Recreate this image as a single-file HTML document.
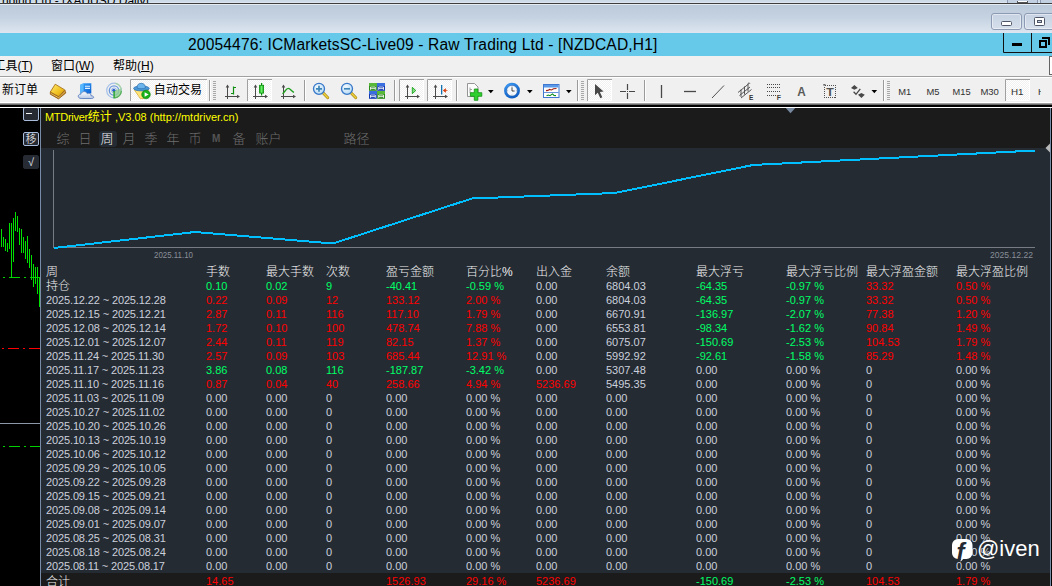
<!DOCTYPE html>
<html lang="zh-CN">
<head>
<meta charset="utf-8">
<title>20054476: ICMarketsSC-Live09 - Raw Trading Ltd - [NZDCAD,H1]</title>
<style>
html,body{margin:0;padding:0;}
body{width:1052px;height:586px;overflow:hidden;position:relative;background:#000;font-family:"Liberation Sans","Noto Sans CJK SC",sans-serif;}
.abs{position:absolute;}
#bgwin{left:0;top:0;width:1052px;height:3px;background:linear-gradient(#cddbe8 0,#cddbe8 2px,#dbe5f0 2px);overflow:hidden;}
#bgwin span{position:absolute;left:2px;top:-6px;font-size:12px;line-height:14px;color:#000;white-space:nowrap;}
#bgline{left:0;top:3px;width:1052px;height:1px;background:#3e3e3e;}
#frame{left:0;top:4px;width:1052px;height:29px;background:linear-gradient(#bbcadb 0%,#c5d2e1 45%,#d2dde9 75%,#dce5f0 100%);border-top:1px solid #e6ecf4;box-sizing:border-box;}
.fb{position:absolute;top:8px;height:17px;border:1px solid #8d9ab4;border-radius:3px;box-sizing:border-box;background:linear-gradient(#c6d2e2,#d6dfeb);box-shadow:inset 0 0 0 1px rgba(255,255,255,.45);}
#title{left:0;top:33px;width:1052px;height:23px;background:#66c9ea;}
#title .t{position:absolute;left:188px;top:1px;font-size:15.6px;line-height:21px;color:#000;white-space:nowrap;letter-spacing:0.14px;}
#menu{left:0;top:56px;width:1052px;height:20px;background:#f0f0f0;}
#menu span{position:absolute;top:2px;font-size:12px;line-height:16px;color:#000;white-space:nowrap;}
#tbline2{left:0;top:104px;width:1052px;height:3px;background:#000;border-top:1px solid #696969;box-sizing:border-box;}
#tbline3{left:0;top:107px;width:1052px;height:1px;background:#fff;}
#left{left:0;top:108px;width:40px;height:478px;background:#000;}
#panel{left:40px;top:108px;width:1010px;height:478px;background:#242b33;border-left:1px solid #788ca8;box-sizing:border-box;}
#phead{left:41px;top:108px;width:1009px;height:40px;background:#1b1b1b;}
#rline{left:1050px;top:108px;width:1px;height:478px;background:#788ca8;}
#redge{left:1051px;top:108px;width:1px;height:478px;background:#000;}
#total{left:41px;top:573px;width:1009px;height:13px;background:#1b1b1b;}
.c{position:absolute;font-size:11px;line-height:14px;white-space:nowrap;}
.c.h{color:#f0f0f0;font-size:12px;font-weight:300;}
.c.w{color:#ccd0dc;}
.c.d{letter-spacing:-0.13px;}
.c.r{color:#ff0000;}
.c.g{color:#00ff66;}

#ptitle{left:45px;top:110px;font-size:11px;line-height:14px;color:#ffff00;white-space:nowrap;}
#tabs{left:0;top:130px;width:1052px;height:18px;}
#tabs span{position:absolute;top:0;font-weight:300;font-size:13px;line-height:18px;color:#6e6e6e;white-space:nowrap;}
#tabs span.on{color:#f0f0f0;background:#242b33;border-radius:3px;padding:0 3.500px 0 1.500px;margin-left:-1.500px;height:16px;top:1px;line-height:16px;}
#tabs span.m{font-size:10px;font-weight:bold;color:#545454;}
.lb{left:23px;width:16px;height:14px;box-sizing:border-box;border:1px solid #a9bcdc;border-radius:2px;background:#252a33;color:#fff;font-weight:300;font-size:11px;line-height:12px;text-align:center;overflow:hidden;}
.lb.nb{border-color:#252a33;font-size:11px;font-weight:normal;color:#e8e8f0;}
#wm{left:950px;top:537px;width:102px;height:26px;color:#fff;}
#wm span{position:absolute;left:27px;top:-1px;font-size:22px;line-height:26px;}
</style>
</head>
<body>
<div id="bgwin" class="abs"><span>nding Ltd - [XAUUSD,Daily]</span><i style="position:absolute;left:1007px;top:0;width:31px;height:3px;background:#c3d0e2;border-left:1px solid #8d9ab2;border-right:1px solid #8d9ab2;box-sizing:border-box"></i><i style="position:absolute;left:1017px;top:1px;width:11px;height:2px;background:#fff;border:1px solid #555;border-top:0;box-sizing:border-box"></i><i style="position:absolute;left:1040px;top:0;width:12px;height:3px;background:#c3d0e2;border-left:1px solid #8d9ab2;box-sizing:border-box"></i></div>
<div id="bgline" class="abs"></div>
<div id="frame" class="abs"><div class="fb" style="left:991px;width:31px"><i style="position:absolute;left:9px;top:7px;width:11px;height:5px;box-sizing:border-box;background:#fff;border:1px solid #4e5566;border-radius:1.5px"></i></div><div class="fb" style="left:1024px;width:34px"><i style="position:absolute;left:9px;top:3px;width:11px;height:9px;box-sizing:border-box;background:#fff;border:1px solid #4e5566;border-radius:1.5px"></i><i style="position:absolute;left:12px;top:6px;width:5px;height:3px;box-sizing:border-box;background:#c8d2e0;border:1px solid #4e5566"></i></div></div>
<div id="title" class="abs"><span class="t">20054476: ICMarketsSC-Live09 - Raw Trading Ltd - [NZDCAD,H1]</span><svg style="position:absolute;left:1000px;top:0" width="52" height="23" viewBox="1000 33 52 23"><path d="M1003.5 33V52.500H1052M1031.500 33V52.500" stroke="#111" stroke-width="1" fill="none"/><rect x="1012" y="43" width="10" height="3" fill="#000"/><rect x="1040" y="41" width="6" height="6" fill="none" stroke="#000" stroke-width="2"/><path d="M1042 38H1049V45" fill="none" stroke="#000" stroke-width="2"/></svg></div>
<div id="menu" class="abs"><span style="left:-6.500px">工具(<u>T</u>)</span><span style="left:51px">窗口(<u>W</u>)</span><span style="left:113px">帮助(<u>H</u>)</span><i style="position:absolute;left:1049px;top:0;width:6px;height:19px;box-sizing:border-box;background:#fff;border:1px solid #646464"></i></div>
<svg class="abs" style="left:0;top:76px" width="1052" height="28" viewBox="0 76 1052 28" font-family="Liberation Sans, Noto Sans CJK SC, sans-serif">
<defs><linearGradient id="gd" x1="0" y1="0" x2="1" y2="1"><stop offset="0" stop-color="#ffea70"/><stop offset="0.6" stop-color="#f0c020"/><stop offset="1" stop-color="#c88a10"/></linearGradient><linearGradient id="bl" x1="0" y1="0" x2="1" y2="1"><stop offset="0" stop-color="#39a8ff"/><stop offset="1" stop-color="#0a5ed0"/></linearGradient><linearGradient id="cl" x1="0" y1="0" x2="0" y2="1"><stop offset="0" stop-color="#ffffff"/><stop offset="1" stop-color="#b8c8e4"/></linearGradient><linearGradient id="gr" x1="0" y1="0" x2="1" y2="0"><stop offset="0" stop-color="#10b010"/><stop offset="0.5" stop-color="#70f070"/><stop offset="1" stop-color="#10b010"/></linearGradient><radialGradient id="ck" cx="0.4" cy="0.3" r="0.8"><stop offset="0" stop-color="#48a8ff"/><stop offset="1" stop-color="#0450b8"/></radialGradient><radialGradient id="mg" cx="0.4" cy="0.35" r="0.7"><stop offset="0" stop-color="#f4fbff"/><stop offset="1" stop-color="#b4d8f4"/></radialGradient><pattern id="dt" width="2" height="2" patternUnits="userSpaceOnUse"><rect width="2" height="2" fill="#f0f0f0"/><rect width="1" height="1" fill="#fff"/><rect x="1" y="1" width="1" height="1" fill="#fff"/></pattern></defs>
<rect x="0" y="76" width="1052" height="28" fill="#f0f0f0"/>
<rect x="0" y="76" width="1052" height="1" fill="#a0a0a0"/><rect x="0" y="77" width="1052" height="1" fill="#ffffff"/>
<rect x="0" y="102" width="1052" height="1" fill="#ffffff"/><rect x="0" y="103" width="1052" height="1" fill="#a0a0a0"/>
<text x="2" y="94.3" font-size="12" fill="#000" textLength="36">新订单</text>
<path d="M50.3 92.2L58.8 96.8L65 90.2L65.8 93L58.5 98.9L50.3 94.2z" fill="#b87a14" stroke="#8a4e06" stroke-width="0.7" stroke-linejoin="round"/><path d="M50.8 93.3L58.7 97.7L65.3 91.4" stroke="#f4dc90" stroke-width="0.7" fill="none"/><path d="M55.2 84.2L64.8 89.9L58.8 96.6L50.3 92z" fill="url(#gd)" stroke="#a0640a" stroke-width="0.8" stroke-linejoin="round"/>
<path d="M80.3 84.8L83.6 83.2H91.3V93.5H80.3z" fill="url(#bl)"/><path d="M80.3 84.8L83.6 83.2V93.5H80.3z" fill="#58b8ff"/><path d="M85 86.2h5M85 88.4h5" stroke="#e4f2ff" stroke-width="1.1"/><path d="M81.2 98.5c-2.2 0-3.2-1.4-2.9-2.7.3-1.2 1.4-1.8 2.5-1.6.4-1.7 1.9-2.7 3.5-2.6 1.4.1 2.5.9 3 2.1.9-.6 2.2-.5 3 .2.6.5.8 1.2.7 1.8 1.4.1 2.7.7 2.7 1.6 0 .8-1.1 1.2-2.5 1.2z" fill="url(#cl)" stroke="#5b7fbe" stroke-width="0.9"/>
<circle cx="114" cy="90.5" r="7.3" fill="none" stroke="#a4c0e8" stroke-width="1.2"/><circle cx="114" cy="90.5" r="4.7" fill="none" stroke="#6c98dc" stroke-width="1.3"/><circle cx="114" cy="90.5" r="2.6" fill="none" stroke="#88aee4" stroke-width="0.8"/><path d="M114 90.5L121.6 88.5A7.8 7.8 0 0 1 114 98.4z" fill="#8ed08e" opacity="0.8"/><path d="M121.1 88.8A7.3 7.3 0 0 0 115.5 83.3" fill="none" stroke="#a8d4a8" stroke-width="1.2"/><path d="M121.3 91A7.3 7.3 0 0 1 115 97.8" fill="none" stroke="#58b058" stroke-width="1.2"/><circle cx="113.8" cy="90.3" r="1.6" fill="#2c60d0"/><rect x="113.4" y="91" width="1.4" height="7.4" fill="#28a428"/>
<rect x="130" y="79" width="77" height="22" fill="url(#dt)" shape-rendering="crispEdges"/><path d="M130.5 101V79.5H207" stroke="#a0a0a0" fill="none"/><path d="M206.5 80V100.5H131" stroke="#ffffff" fill="none"/>
<path d="M134.3 89.8L140.3 98.6L143.6 98.6L148.6 89.6z" fill="#ffe478" stroke="#d4a424" stroke-width="0.7" stroke-linejoin="round"/><ellipse cx="141.4" cy="88.4" rx="7.9" ry="2.5" fill="#4a98d8" stroke="#2c6eae" stroke-width="0.7"/><path d="M137 88C137 84.8 138.6 83.3 141.2 83.3C143.8 83.3 145.3 84.8 145.5 88C143 89 139.5 89 137 88z" fill="#6cb4ec" stroke="#2c6eae" stroke-width="0.7"/><circle cx="146" cy="94.5" r="4.3" fill="#18b018" stroke="#0a800a" stroke-width="0.6"/><path d="M144.6 92.2L148.6 94.5L144.6 96.8z" fill="#fff"/>
<text x="153.8" y="94.3" font-size="12" fill="#000" textLength="48.3">自动交易</text>
<rect x="209" y="80" width="1" height="21" fill="#9a9a9a"/><rect x="210" y="80" width="1" height="21" fill="#fdfdfd"/>
<rect x="213" y="81" width="3" height="1" fill="#a8a8a8"/><rect x="213" y="83" width="3" height="1" fill="#a8a8a8"/><rect x="213" y="85" width="3" height="1" fill="#a8a8a8"/><rect x="213" y="87" width="3" height="1" fill="#a8a8a8"/><rect x="213" y="89" width="3" height="1" fill="#a8a8a8"/><rect x="213" y="91" width="3" height="1" fill="#a8a8a8"/><rect x="213" y="93" width="3" height="1" fill="#a8a8a8"/><rect x="213" y="95" width="3" height="1" fill="#a8a8a8"/><rect x="213" y="97" width="3" height="1" fill="#a8a8a8"/><rect x="213" y="99" width="3" height="1" fill="#a8a8a8"/>
<path d="M227.5 86V99M225 96.5H238" stroke="#4a4a4a" stroke-width="1" fill="none"/><path d="M225.7 87.5L227.5 84.5L229.3 87.5zM237 94.7L240 96.5L237 98.3z" fill="#4a4a4a"/>
<path d="M233.5 86.5V94.5M233.5 87.5H236M233.5 93.5H231" stroke="#109010" stroke-width="1.2" fill="none"/>
<rect x="247" y="79" width="25" height="22" fill="url(#dt)" shape-rendering="crispEdges"/><path d="M247.5 101V79.5H272" stroke="#a0a0a0" fill="none"/><path d="M271.5 80V100.5H248" stroke="#ffffff" fill="none"/>
<path d="M255.5 86V99M253 96.5H266" stroke="#4a4a4a" stroke-width="1" fill="none"/><path d="M253.7 87.5L255.5 84.5L257.3 87.5zM265 94.7L268 96.5L265 98.3z" fill="#4a4a4a"/>
<rect x="261" y="83" width="1.2" height="12.5" fill="#0a900a"/><rect x="259.6" y="85.3" width="4" height="7.8" fill="url(#gr)" stroke="#0a900a" stroke-width="0.8"/>
<path d="M283.5 86V99M281 96.5H294" stroke="#4a4a4a" stroke-width="1" fill="none"/><path d="M281.7 87.5L283.5 84.5L285.3 87.5zM293 94.7L296 96.5L293 98.3z" fill="#4a4a4a"/>
<path d="M282.5 93.8C285 92 286 88.4 288.3 88.4C290.5 88.4 291.5 91.5 294 92.3" stroke="#20a020" stroke-width="1.4" fill="none"/>
<rect x="304" y="80" width="1" height="21" fill="#9a9a9a"/><rect x="305" y="80" width="1" height="21" fill="#fdfdfd"/>
<path d="M323.2 93L327.8 97.8" stroke="#a88408" stroke-width="2.8" stroke-linecap="round"/><path d="M323.2 93L327.8 97.8" stroke="#ecd040" stroke-width="1.6" stroke-linecap="round"/>
<circle cx="319" cy="88.8" r="5.5" fill="url(#mg)" stroke="#3878c8" stroke-width="1.3"/>
<path d="M316 88.8H322M319 85.8V91.8" stroke="#3f86b8" stroke-width="1.7"/>
<path d="M351.2 93L355.8 97.8" stroke="#a88408" stroke-width="2.8" stroke-linecap="round"/><path d="M351.2 93L355.8 97.8" stroke="#ecd040" stroke-width="1.6" stroke-linecap="round"/>
<circle cx="347" cy="88.8" r="5.5" fill="url(#mg)" stroke="#3878c8" stroke-width="1.3"/>
<path d="M344 88.8H350" stroke="#3f86b8" stroke-width="1.7"/>
<rect x="369" y="83" width="7.8" height="7.8" fill="#2a8a18"/><rect x="369" y="83" width="7.8" height="3" fill="#58b838"/><path d="M370.5 89.8V87H375.3V89.8M370.5 88.6H375.3" stroke="#fff" stroke-width="0.9" fill="none" opacity="0.9"/>
<rect x="377.2" y="83" width="7.8" height="7.8" fill="#1038b0"/><rect x="377.2" y="83" width="7.8" height="3" fill="#3a6ee0"/><path d="M378.7 89.8V87H383.5V89.8M378.7 88.6H383.5" stroke="#fff" stroke-width="0.9" fill="none" opacity="0.9"/>
<rect x="369" y="91" width="7.8" height="7.8" fill="#1038b0"/><rect x="369" y="91" width="7.8" height="3" fill="#3a6ee0"/><path d="M370.5 97.8V95H375.3V97.8M370.5 96.6H375.3" stroke="#fff" stroke-width="0.9" fill="none" opacity="0.9"/>
<rect x="377.2" y="91" width="7.8" height="7.8" fill="#2a8a18"/><rect x="377.2" y="91" width="7.8" height="3" fill="#58b838"/><path d="M378.7 97.8V95H383.5V97.8M378.7 96.6H383.5" stroke="#fff" stroke-width="0.9" fill="none" opacity="0.9"/>
<rect x="394" y="80" width="1" height="21" fill="#9a9a9a"/><rect x="395" y="80" width="1" height="21" fill="#fdfdfd"/>
<rect x="399" y="79" width="25" height="22" fill="url(#dt)" shape-rendering="crispEdges"/><path d="M399.5 101V79.5H424" stroke="#a0a0a0" fill="none"/><path d="M423.5 80V100.5H400" stroke="#ffffff" fill="none"/>
<path d="M407.5 86V99M405 96.5H418" stroke="#4a4a4a" stroke-width="1" fill="none"/><path d="M405.7 87.5L407.5 84.5L409.3 87.5zM417 94.7L420 96.5L417 98.3z" fill="#4a4a4a"/>
<path d="M412.3 87.3L415.8 90.5L412.3 93.7z" fill="#80dc80" stroke="#18a018" stroke-width="0.9"/>
<rect x="427" y="79" width="25" height="22" fill="url(#dt)" shape-rendering="crispEdges"/><path d="M427.5 101V79.5H452" stroke="#a0a0a0" fill="none"/><path d="M451.5 80V100.5H428" stroke="#ffffff" fill="none"/>
<path d="M435.5 86V99M433 96.5H446" stroke="#4a4a4a" stroke-width="1" fill="none"/><path d="M433.7 87.5L435.5 84.5L437.3 87.5zM445 94.7L448 96.5L445 98.3z" fill="#4a4a4a"/>
<rect x="441" y="85" width="1.3" height="9.5" fill="#1070b0"/><path d="M443.2 90.5L445.6 88.7V92.3zM445 90.5H447.5" fill="#d84010" stroke="#d84010" stroke-width="0.7"/>
<rect x="456" y="80" width="1" height="21" fill="#9a9a9a"/><rect x="457" y="80" width="1" height="21" fill="#fdfdfd"/>
<path d="M467.5 83.5h7l3.5 3.5v9.5h-10.5z" fill="#fcfcfc" stroke="#8a8a8a" stroke-width="0.9"/><path d="M470 87.5v5.5h2M470 89.5h2" stroke="#909090" stroke-width="0.8" fill="none"/><path d="M474.3 89h3.6v3.7h3.9v3.6h-3.9v4h-3.6v-4h-3.9v-3.6h3.9z" fill="#30d030" stroke="#109010" stroke-width="0.8"/>
<path d="M488 90h5.6l-2.8 3.2z" fill="#000"/>
<circle cx="512" cy="90.7" r="7.9" fill="url(#ck)"/><circle cx="512" cy="90.7" r="5.4" fill="#f4f8fc" stroke="#0a48a0" stroke-width="0.5"/><path d="M512 87.3V91H514.6" stroke="#303030" stroke-width="0.9" fill="none"/><path d="M512 86v.8M512 94.6v.8M507.3 90.7h.8M515.9 90.7h.8" stroke="#8090a8" stroke-width="0.7"/>
<path d="M527 90h5.6l-2.8 3.2z" fill="#000"/>
<rect x="543.5" y="84.5" width="15.5" height="13" fill="#fff" stroke="#3f78d0" stroke-width="1"/><rect x="544" y="85" width="14.5" height="2.5" fill="#5a98e8"/><path d="M544 92.5H558.5" stroke="#3f78d0" stroke-width="0.8"/><path d="M546 90.6l2-.2 1.5-1 2 .6 2-1.2 3-.3" stroke="#a02010" stroke-width="1.1" fill="none"/><path d="M546.5 95.8l2-.7 1.5.6 2.5-1.8 1.5 1.5 2 .2" stroke="#109020" stroke-width="1.1" fill="none"/>
<path d="M566 90h5.6l-2.8 3.2z" fill="#000"/>
<rect x="577" y="80" width="1" height="21" fill="#9a9a9a"/><rect x="578" y="80" width="1" height="21" fill="#fdfdfd"/>
<rect x="581" y="81" width="3" height="1" fill="#a8a8a8"/><rect x="581" y="83" width="3" height="1" fill="#a8a8a8"/><rect x="581" y="85" width="3" height="1" fill="#a8a8a8"/><rect x="581" y="87" width="3" height="1" fill="#a8a8a8"/><rect x="581" y="89" width="3" height="1" fill="#a8a8a8"/><rect x="581" y="91" width="3" height="1" fill="#a8a8a8"/><rect x="581" y="93" width="3" height="1" fill="#a8a8a8"/><rect x="581" y="95" width="3" height="1" fill="#a8a8a8"/><rect x="581" y="97" width="3" height="1" fill="#a8a8a8"/><rect x="581" y="99" width="3" height="1" fill="#a8a8a8"/>
<rect x="587" y="79" width="25" height="22" fill="url(#dt)" shape-rendering="crispEdges"/><path d="M587.5 101V79.5H612" stroke="#a0a0a0" fill="none"/><path d="M611.5 80V100.5H588" stroke="#ffffff" fill="none"/>
<path d="M595 84V95.2L597.8 92.7L600.3 98.2L602.3 97.2L599.9 92L603.6 91.6z" fill="#484848"/>
<path d="M627.5 84V90M627.5 93V99M620 91.5H626M629 91.5H635" stroke="#484848" stroke-width="1.2"/><rect x="627" y="91" width="1" height="1" fill="#484848"/>
<rect x="644" y="80" width="1" height="21" fill="#9a9a9a"/><rect x="645" y="80" width="1" height="21" fill="#fdfdfd"/>
<path d="M661.5 85V98" stroke="#484848" stroke-width="1.3"/>
<path d="M684 91.5H696" stroke="#484848" stroke-width="1.3"/>
<path d="M712 98L724 85.5" stroke="#505050" stroke-width="1"/>
<path d="M738 92.5L748.5 84M739.5 95.5L750 87M741 98L751.5 89.5M741 97V89.5M744.5 94.5V86.5M748 91.5V83.5C748.8 82.8 749.8 83 750 83.8" stroke="#484848" stroke-width="0.9" fill="none"/>
<text x="749" y="99.7" font-size="6.5" font-weight="bold" fill="#303030">E</text>
<rect x="767" y="84" width="1" height="1" fill="#484848"/><rect x="769" y="84" width="1" height="1" fill="#484848"/><rect x="771" y="84" width="1" height="1" fill="#484848"/><rect x="773" y="84" width="1" height="1" fill="#484848"/><rect x="775" y="84" width="1" height="1" fill="#484848"/><rect x="777" y="84" width="1" height="1" fill="#484848"/><rect x="779" y="84" width="1" height="1" fill="#484848"/>
<rect x="767" y="87" width="1" height="1" fill="#484848"/><rect x="769" y="87" width="1" height="1" fill="#484848"/><rect x="771" y="87" width="1" height="1" fill="#484848"/><rect x="773" y="87" width="1" height="1" fill="#484848"/><rect x="775" y="87" width="1" height="1" fill="#484848"/><rect x="777" y="87" width="1" height="1" fill="#484848"/><rect x="779" y="87" width="1" height="1" fill="#484848"/>
<rect x="767" y="91" width="1" height="1" fill="#484848"/><rect x="769" y="91" width="1" height="1" fill="#484848"/><rect x="771" y="91" width="1" height="1" fill="#484848"/><rect x="773" y="91" width="1" height="1" fill="#484848"/><rect x="775" y="91" width="1" height="1" fill="#484848"/><rect x="777" y="91" width="1" height="1" fill="#484848"/><rect x="779" y="91" width="1" height="1" fill="#484848"/>
<rect x="767" y="95" width="1" height="1" fill="#484848"/><rect x="769" y="95" width="1" height="1" fill="#484848"/><rect x="771" y="95" width="1" height="1" fill="#484848"/><rect x="773" y="95" width="1" height="1" fill="#484848"/><rect x="775" y="95" width="1" height="1" fill="#484848"/>
<text x="776.8" y="99.8" font-size="6.8" font-weight="bold" fill="#404040">F</text>
<text x="797.3" y="95.8" font-size="12" font-weight="bold" fill="#5a5a5a" textLength="8.5" lengthAdjust="spacingAndGlyphs">A</text>
<rect x="824.5" y="85.5" width="11" height="12" fill="none" stroke="#505050" stroke-width="1" stroke-dasharray="1 1" shape-rendering="crispEdges"/><text x="826.3" y="95.8" font-size="11" font-weight="bold" fill="#505050" textLength="7.6" lengthAdjust="spacingAndGlyphs">T</text><rect x="823.3" y="84.2" width="2.2" height="1.3" fill="#484848"/>
<path d="M851 88L854.4 85L857.8 88L854.4 89.8zM858 94.8L861.4 93L864.8 94.8L861.4 98z" fill="#484848"/><path d="M853.6 91.8L856 94.3L860.3 88.8" fill="none" stroke="#484848" stroke-width="1.3"/>
<path d="M871.5 90h5.6l-2.8 3.2z" fill="#000"/>
<rect x="883" y="80" width="1" height="21" fill="#9a9a9a"/><rect x="884" y="80" width="1" height="21" fill="#fdfdfd"/>
<rect x="887" y="81" width="3" height="1" fill="#a8a8a8"/><rect x="887" y="83" width="3" height="1" fill="#a8a8a8"/><rect x="887" y="85" width="3" height="1" fill="#a8a8a8"/><rect x="887" y="87" width="3" height="1" fill="#a8a8a8"/><rect x="887" y="89" width="3" height="1" fill="#a8a8a8"/><rect x="887" y="91" width="3" height="1" fill="#a8a8a8"/><rect x="887" y="93" width="3" height="1" fill="#a8a8a8"/><rect x="887" y="95" width="3" height="1" fill="#a8a8a8"/><rect x="887" y="97" width="3" height="1" fill="#a8a8a8"/><rect x="887" y="99" width="3" height="1" fill="#a8a8a8"/>
<text x="898.3" y="95" font-size="9.5" fill="#303030" textLength="13" lengthAdjust="spacingAndGlyphs">M1</text>
<text x="926.5" y="95" font-size="9.5" fill="#303030" textLength="13" lengthAdjust="spacingAndGlyphs">M5</text>
<text x="952.6" y="95" font-size="9.5" fill="#303030" textLength="18" lengthAdjust="spacingAndGlyphs">M15</text>
<text x="980.4" y="95" font-size="9.5" fill="#303030" textLength="18.5" lengthAdjust="spacingAndGlyphs">M30</text>
<rect x="1005" y="79" width="25" height="22" fill="url(#dt)" shape-rendering="crispEdges"/><path d="M1005.5 101V79.5H1030" stroke="#a0a0a0" fill="none"/><path d="M1029.5 80V100.5H1006" stroke="#ffffff" fill="none"/>
<text x="1011" y="95" font-size="9.5" fill="#303030" textLength="12.5" lengthAdjust="spacingAndGlyphs">H1</text>
<svg x="1037" y="84" width="4" height="14" viewBox="1037 84 4 14"><text x="1038" y="95" font-size="9.5" fill="#303030">H4</text></svg>
</svg>
<div id="tbline2" class="abs"></div>

<div id="left" class="abs"></div>
<div id="panel" class="abs"></div>
<div id="phead" class="abs"></div>
<div id="total" class="abs"></div>
<div id="rline" class="abs"></div>
<div id="redge" class="abs"></div>
<svg class="abs" style="left:0;top:107px" width="40" height="479" viewBox="0 107 40 479" shape-rendering="crispEdges">
<line x1="0" y1="277.5" x2="40" y2="277.5" stroke="#00d000" stroke-width="1" stroke-dasharray="11 4 2 4" stroke-dashoffset="12"/>
<line x1="0" y1="348.5" x2="40" y2="348.5" stroke="#ff0000" stroke-width="1" stroke-dasharray="11 4 2 4" stroke-dashoffset="13"/>
<line x1="0" y1="423.5" x2="40" y2="423.5" stroke="#8c97a8" stroke-width="1"/>
<line x1="0" y1="446.5" x2="40" y2="446.5" stroke="#00d000" stroke-width="1" stroke-dasharray="11 4 2 4" stroke-dashoffset="12"/>
<path d="M1.5 229V247M3.5 237V247M5.5 239V251M7.5 243V252M9.5 223V249M11.5 223V278M13.5 218V262M15.5 212V231M17.5 216V232M19.5 228V245M21.5 229V253M23.5 237V253M25.5 241V259M27.5 236V263M29.5 249V268M31.5 255V280M33.5 264V287M35.5 267V284M37.5 267V294M39.5 278V307" stroke="#00e000" stroke-width="1" fill="none"/>
</svg>
<svg class="abs" style="left:40px;top:140px" width="1012" height="125" viewBox="40 140 1012 125">
<g shape-rendering="crispEdges">
<line x1="53.5" y1="150" x2="53.5" y2="248" stroke="#767b84" stroke-width="1"/>
<line x1="53" y1="247.5" x2="1035" y2="247.5" stroke="#767b84" stroke-width="1"/>
<polyline points="54,248 195,232 333,243.500 472,198.500 615,193 753,165 1035,150.500" fill="none" stroke="#00bfff" stroke-width="2"/>
</g>
<polygon points="1045.5,148 1050,143.5 1050,152.5" fill="#b8b8b8"/>
<text x="154" y="257.500" font-size="9" fill="#8a8f98" font-family="Liberation Sans, sans-serif" textLength="39" lengthAdjust="spacingAndGlyphs">2025.11.10</text>
<text x="990" y="257.500" font-size="9" fill="#8a8f98" font-family="Liberation Sans, sans-serif" textLength="43" lengthAdjust="spacingAndGlyphs">2025.12.22</text>
</svg>
<div class="abs" id="ptitle"><span style="letter-spacing:-0.3px">MTDriver</span><span style="font-size:12px">统计</span> ,V3.08 (http://mtdriver.cn)</div>
<div class="abs" id="tabs"><span style="left:56.5px">综</span><span style="left:78.5px">日</span><span class="on" style="left:100.500px">周</span><span style="left:122.5px">月</span><span style="left:144.5px">季</span><span style="left:166.5px">年</span><span style="left:188.5px">币</span><span style="left:212px" class="m">M</span><span style="left:232.5px">备</span><span style="left:255.500px">账户</span><span style="left:343.500px">路径</span></div>
<div class="abs lb" style="top:107px"><i style="position:absolute;left:2px;top:5px;width:6px;height:1px;background:#f4f4f4"></i></div>
<div class="abs lb" style="top:132px">移</div>
<div class="abs lb nb" style="top:155px">√</div>


<span class="c h" style="left:46px;top:265px">周</span>
<span class="c h" style="left:206px;top:265px">手数</span>
<span class="c h" style="left:266px;top:265px">最大手数</span>
<span class="c h" style="left:326px;top:265px">次数</span>
<span class="c h" style="left:386px;top:265px">盈亏金额</span>
<span class="c h" style="left:466px;top:265px">百分比%</span>
<span class="c h" style="left:536px;top:265px">出入金</span>
<span class="c h" style="left:606px;top:265px">余额</span>
<span class="c h" style="left:696px;top:265px">最大浮亏</span>
<span class="c h" style="left:786px;top:265px">最大浮亏比例</span>
<span class="c h" style="left:866px;top:265px">最大浮盈金额</span>
<span class="c h" style="left:956px;top:265px">最大浮盈比例</span>
<span class="c h" style="left:46px;top:279px">持仓</span>
<span class="c g" style="left:206px;top:279px">0.10</span>
<span class="c g" style="left:266px;top:279px">0.02</span>
<span class="c g" style="left:326px;top:279px">9</span>
<span class="c g" style="left:386px;top:279px">-40.41</span>
<span class="c g" style="left:466px;top:279px">-0.59 %</span>
<span class="c w" style="left:536px;top:279px">0.00</span>
<span class="c w" style="left:606px;top:279px">6804.03</span>
<span class="c g" style="left:696px;top:279px">-64.35</span>
<span class="c g" style="left:786px;top:279px">-0.97 %</span>
<span class="c r" style="left:866px;top:279px">33.32</span>
<span class="c r" style="left:956px;top:279px">0.50 %</span>
<span class="c w d" style="left:46px;top:293px">2025.12.22 ~ 2025.12.28</span>
<span class="c r" style="left:206px;top:293px">0.22</span>
<span class="c r" style="left:266px;top:293px">0.09</span>
<span class="c r" style="left:326px;top:293px">12</span>
<span class="c r" style="left:386px;top:293px">133.12</span>
<span class="c r" style="left:466px;top:293px">2.00 %</span>
<span class="c w" style="left:536px;top:293px">0.00</span>
<span class="c w" style="left:606px;top:293px">6804.03</span>
<span class="c g" style="left:696px;top:293px">-64.35</span>
<span class="c g" style="left:786px;top:293px">-0.97 %</span>
<span class="c r" style="left:866px;top:293px">33.32</span>
<span class="c r" style="left:956px;top:293px">0.50 %</span>
<span class="c w d" style="left:46px;top:307px">2025.12.15 ~ 2025.12.21</span>
<span class="c r" style="left:206px;top:307px">2.87</span>
<span class="c r" style="left:266px;top:307px">0.11</span>
<span class="c r" style="left:326px;top:307px">116</span>
<span class="c r" style="left:386px;top:307px">117.10</span>
<span class="c r" style="left:466px;top:307px">1.79 %</span>
<span class="c w" style="left:536px;top:307px">0.00</span>
<span class="c w" style="left:606px;top:307px">6670.91</span>
<span class="c g" style="left:696px;top:307px">-136.97</span>
<span class="c g" style="left:786px;top:307px">-2.07 %</span>
<span class="c r" style="left:866px;top:307px">77.38</span>
<span class="c r" style="left:956px;top:307px">1.20 %</span>
<span class="c w d" style="left:46px;top:321px">2025.12.08 ~ 2025.12.14</span>
<span class="c r" style="left:206px;top:321px">1.72</span>
<span class="c r" style="left:266px;top:321px">0.10</span>
<span class="c r" style="left:326px;top:321px">100</span>
<span class="c r" style="left:386px;top:321px">478.74</span>
<span class="c r" style="left:466px;top:321px">7.88 %</span>
<span class="c w" style="left:536px;top:321px">0.00</span>
<span class="c w" style="left:606px;top:321px">6553.81</span>
<span class="c g" style="left:696px;top:321px">-98.34</span>
<span class="c g" style="left:786px;top:321px">-1.62 %</span>
<span class="c r" style="left:866px;top:321px">90.84</span>
<span class="c r" style="left:956px;top:321px">1.49 %</span>
<span class="c w d" style="left:46px;top:335px">2025.12.01 ~ 2025.12.07</span>
<span class="c r" style="left:206px;top:335px">2.44</span>
<span class="c r" style="left:266px;top:335px">0.11</span>
<span class="c r" style="left:326px;top:335px">119</span>
<span class="c r" style="left:386px;top:335px">82.15</span>
<span class="c r" style="left:466px;top:335px">1.37 %</span>
<span class="c w" style="left:536px;top:335px">0.00</span>
<span class="c w" style="left:606px;top:335px">6075.07</span>
<span class="c g" style="left:696px;top:335px">-150.69</span>
<span class="c g" style="left:786px;top:335px">-2.53 %</span>
<span class="c r" style="left:866px;top:335px">104.53</span>
<span class="c r" style="left:956px;top:335px">1.79 %</span>
<span class="c w d" style="left:46px;top:349px">2025.11.24 ~ 2025.11.30</span>
<span class="c r" style="left:206px;top:349px">2.57</span>
<span class="c r" style="left:266px;top:349px">0.09</span>
<span class="c r" style="left:326px;top:349px">103</span>
<span class="c r" style="left:386px;top:349px">685.44</span>
<span class="c r" style="left:466px;top:349px">12.91 %</span>
<span class="c w" style="left:536px;top:349px">0.00</span>
<span class="c w" style="left:606px;top:349px">5992.92</span>
<span class="c g" style="left:696px;top:349px">-92.61</span>
<span class="c g" style="left:786px;top:349px">-1.58 %</span>
<span class="c r" style="left:866px;top:349px">85.29</span>
<span class="c r" style="left:956px;top:349px">1.48 %</span>
<span class="c w d" style="left:46px;top:363px">2025.11.17 ~ 2025.11.23</span>
<span class="c g" style="left:206px;top:363px">3.86</span>
<span class="c g" style="left:266px;top:363px">0.08</span>
<span class="c g" style="left:326px;top:363px">116</span>
<span class="c g" style="left:386px;top:363px">-187.87</span>
<span class="c g" style="left:466px;top:363px">-3.42 %</span>
<span class="c w" style="left:536px;top:363px">0.00</span>
<span class="c w" style="left:606px;top:363px">5307.48</span>
<span class="c w" style="left:696px;top:363px">0.00</span>
<span class="c w" style="left:786px;top:363px">0.00 %</span>
<span class="c w" style="left:866px;top:363px">0</span>
<span class="c w" style="left:956px;top:363px">0.00 %</span>
<span class="c w d" style="left:46px;top:377px">2025.11.10 ~ 2025.11.16</span>
<span class="c r" style="left:206px;top:377px">0.87</span>
<span class="c r" style="left:266px;top:377px">0.04</span>
<span class="c r" style="left:326px;top:377px">40</span>
<span class="c r" style="left:386px;top:377px">258.66</span>
<span class="c r" style="left:466px;top:377px">4.94 %</span>
<span class="c r" style="left:536px;top:377px">5236.69</span>
<span class="c w" style="left:606px;top:377px">5495.35</span>
<span class="c w" style="left:696px;top:377px">0.00</span>
<span class="c w" style="left:786px;top:377px">0.00 %</span>
<span class="c w" style="left:866px;top:377px">0</span>
<span class="c w" style="left:956px;top:377px">0.00 %</span>
<span class="c w d" style="left:46px;top:391px">2025.11.03 ~ 2025.11.09</span>
<span class="c w" style="left:206px;top:391px">0.00</span>
<span class="c w" style="left:266px;top:391px">0.00</span>
<span class="c w" style="left:326px;top:391px">0</span>
<span class="c w" style="left:386px;top:391px">0.00</span>
<span class="c w" style="left:466px;top:391px">0.00 %</span>
<span class="c w" style="left:536px;top:391px">0.00</span>
<span class="c w" style="left:606px;top:391px">0.00</span>
<span class="c w" style="left:696px;top:391px">0.00</span>
<span class="c w" style="left:786px;top:391px">0.00 %</span>
<span class="c w" style="left:866px;top:391px">0</span>
<span class="c w" style="left:956px;top:391px">0.00 %</span>
<span class="c w d" style="left:46px;top:405px">2025.10.27 ~ 2025.11.02</span>
<span class="c w" style="left:206px;top:405px">0.00</span>
<span class="c w" style="left:266px;top:405px">0.00</span>
<span class="c w" style="left:326px;top:405px">0</span>
<span class="c w" style="left:386px;top:405px">0.00</span>
<span class="c w" style="left:466px;top:405px">0.00 %</span>
<span class="c w" style="left:536px;top:405px">0.00</span>
<span class="c w" style="left:606px;top:405px">0.00</span>
<span class="c w" style="left:696px;top:405px">0.00</span>
<span class="c w" style="left:786px;top:405px">0.00 %</span>
<span class="c w" style="left:866px;top:405px">0</span>
<span class="c w" style="left:956px;top:405px">0.00 %</span>
<span class="c w d" style="left:46px;top:419px">2025.10.20 ~ 2025.10.26</span>
<span class="c w" style="left:206px;top:419px">0.00</span>
<span class="c w" style="left:266px;top:419px">0.00</span>
<span class="c w" style="left:326px;top:419px">0</span>
<span class="c w" style="left:386px;top:419px">0.00</span>
<span class="c w" style="left:466px;top:419px">0.00 %</span>
<span class="c w" style="left:536px;top:419px">0.00</span>
<span class="c w" style="left:606px;top:419px">0.00</span>
<span class="c w" style="left:696px;top:419px">0.00</span>
<span class="c w" style="left:786px;top:419px">0.00 %</span>
<span class="c w" style="left:866px;top:419px">0</span>
<span class="c w" style="left:956px;top:419px">0.00 %</span>
<span class="c w d" style="left:46px;top:433px">2025.10.13 ~ 2025.10.19</span>
<span class="c w" style="left:206px;top:433px">0.00</span>
<span class="c w" style="left:266px;top:433px">0.00</span>
<span class="c w" style="left:326px;top:433px">0</span>
<span class="c w" style="left:386px;top:433px">0.00</span>
<span class="c w" style="left:466px;top:433px">0.00 %</span>
<span class="c w" style="left:536px;top:433px">0.00</span>
<span class="c w" style="left:606px;top:433px">0.00</span>
<span class="c w" style="left:696px;top:433px">0.00</span>
<span class="c w" style="left:786px;top:433px">0.00 %</span>
<span class="c w" style="left:866px;top:433px">0</span>
<span class="c w" style="left:956px;top:433px">0.00 %</span>
<span class="c w d" style="left:46px;top:447px">2025.10.06 ~ 2025.10.12</span>
<span class="c w" style="left:206px;top:447px">0.00</span>
<span class="c w" style="left:266px;top:447px">0.00</span>
<span class="c w" style="left:326px;top:447px">0</span>
<span class="c w" style="left:386px;top:447px">0.00</span>
<span class="c w" style="left:466px;top:447px">0.00 %</span>
<span class="c w" style="left:536px;top:447px">0.00</span>
<span class="c w" style="left:606px;top:447px">0.00</span>
<span class="c w" style="left:696px;top:447px">0.00</span>
<span class="c w" style="left:786px;top:447px">0.00 %</span>
<span class="c w" style="left:866px;top:447px">0</span>
<span class="c w" style="left:956px;top:447px">0.00 %</span>
<span class="c w d" style="left:46px;top:461px">2025.09.29 ~ 2025.10.05</span>
<span class="c w" style="left:206px;top:461px">0.00</span>
<span class="c w" style="left:266px;top:461px">0.00</span>
<span class="c w" style="left:326px;top:461px">0</span>
<span class="c w" style="left:386px;top:461px">0.00</span>
<span class="c w" style="left:466px;top:461px">0.00 %</span>
<span class="c w" style="left:536px;top:461px">0.00</span>
<span class="c w" style="left:606px;top:461px">0.00</span>
<span class="c w" style="left:696px;top:461px">0.00</span>
<span class="c w" style="left:786px;top:461px">0.00 %</span>
<span class="c w" style="left:866px;top:461px">0</span>
<span class="c w" style="left:956px;top:461px">0.00 %</span>
<span class="c w d" style="left:46px;top:475px">2025.09.22 ~ 2025.09.28</span>
<span class="c w" style="left:206px;top:475px">0.00</span>
<span class="c w" style="left:266px;top:475px">0.00</span>
<span class="c w" style="left:326px;top:475px">0</span>
<span class="c w" style="left:386px;top:475px">0.00</span>
<span class="c w" style="left:466px;top:475px">0.00 %</span>
<span class="c w" style="left:536px;top:475px">0.00</span>
<span class="c w" style="left:606px;top:475px">0.00</span>
<span class="c w" style="left:696px;top:475px">0.00</span>
<span class="c w" style="left:786px;top:475px">0.00 %</span>
<span class="c w" style="left:866px;top:475px">0</span>
<span class="c w" style="left:956px;top:475px">0.00 %</span>
<span class="c w d" style="left:46px;top:489px">2025.09.15 ~ 2025.09.21</span>
<span class="c w" style="left:206px;top:489px">0.00</span>
<span class="c w" style="left:266px;top:489px">0.00</span>
<span class="c w" style="left:326px;top:489px">0</span>
<span class="c w" style="left:386px;top:489px">0.00</span>
<span class="c w" style="left:466px;top:489px">0.00 %</span>
<span class="c w" style="left:536px;top:489px">0.00</span>
<span class="c w" style="left:606px;top:489px">0.00</span>
<span class="c w" style="left:696px;top:489px">0.00</span>
<span class="c w" style="left:786px;top:489px">0.00 %</span>
<span class="c w" style="left:866px;top:489px">0</span>
<span class="c w" style="left:956px;top:489px">0.00 %</span>
<span class="c w d" style="left:46px;top:503px">2025.09.08 ~ 2025.09.14</span>
<span class="c w" style="left:206px;top:503px">0.00</span>
<span class="c w" style="left:266px;top:503px">0.00</span>
<span class="c w" style="left:326px;top:503px">0</span>
<span class="c w" style="left:386px;top:503px">0.00</span>
<span class="c w" style="left:466px;top:503px">0.00 %</span>
<span class="c w" style="left:536px;top:503px">0.00</span>
<span class="c w" style="left:606px;top:503px">0.00</span>
<span class="c w" style="left:696px;top:503px">0.00</span>
<span class="c w" style="left:786px;top:503px">0.00 %</span>
<span class="c w" style="left:866px;top:503px">0</span>
<span class="c w" style="left:956px;top:503px">0.00 %</span>
<span class="c w d" style="left:46px;top:517px">2025.09.01 ~ 2025.09.07</span>
<span class="c w" style="left:206px;top:517px">0.00</span>
<span class="c w" style="left:266px;top:517px">0.00</span>
<span class="c w" style="left:326px;top:517px">0</span>
<span class="c w" style="left:386px;top:517px">0.00</span>
<span class="c w" style="left:466px;top:517px">0.00 %</span>
<span class="c w" style="left:536px;top:517px">0.00</span>
<span class="c w" style="left:606px;top:517px">0.00</span>
<span class="c w" style="left:696px;top:517px">0.00</span>
<span class="c w" style="left:786px;top:517px">0.00 %</span>
<span class="c w" style="left:866px;top:517px">0</span>
<span class="c w" style="left:956px;top:517px">0.00 %</span>
<span class="c w d" style="left:46px;top:531px">2025.08.25 ~ 2025.08.31</span>
<span class="c w" style="left:206px;top:531px">0.00</span>
<span class="c w" style="left:266px;top:531px">0.00</span>
<span class="c w" style="left:326px;top:531px">0</span>
<span class="c w" style="left:386px;top:531px">0.00</span>
<span class="c w" style="left:466px;top:531px">0.00 %</span>
<span class="c w" style="left:536px;top:531px">0.00</span>
<span class="c w" style="left:606px;top:531px">0.00</span>
<span class="c w" style="left:696px;top:531px">0.00</span>
<span class="c w" style="left:786px;top:531px">0.00 %</span>
<span class="c w" style="left:866px;top:531px">0</span>
<span class="c w" style="left:956px;top:531px">0.00 %</span>
<span class="c w d" style="left:46px;top:545px">2025.08.18 ~ 2025.08.24</span>
<span class="c w" style="left:206px;top:545px">0.00</span>
<span class="c w" style="left:266px;top:545px">0.00</span>
<span class="c w" style="left:326px;top:545px">0</span>
<span class="c w" style="left:386px;top:545px">0.00</span>
<span class="c w" style="left:466px;top:545px">0.00 %</span>
<span class="c w" style="left:536px;top:545px">0.00</span>
<span class="c w" style="left:606px;top:545px">0.00</span>
<span class="c w" style="left:696px;top:545px">0.00</span>
<span class="c w" style="left:786px;top:545px">0.00 %</span>
<span class="c w" style="left:866px;top:545px">0</span>
<span class="c w" style="left:956px;top:545px">0.00 %</span>
<span class="c w d" style="left:46px;top:559px">2025.08.11 ~ 2025.08.17</span>
<span class="c w" style="left:206px;top:559px">0.00</span>
<span class="c w" style="left:266px;top:559px">0.00</span>
<span class="c w" style="left:326px;top:559px">0</span>
<span class="c w" style="left:386px;top:559px">0.00</span>
<span class="c w" style="left:466px;top:559px">0.00 %</span>
<span class="c w" style="left:536px;top:559px">0.00</span>
<span class="c w" style="left:606px;top:559px">0.00</span>
<span class="c w" style="left:696px;top:559px">0.00</span>
<span class="c w" style="left:786px;top:559px">0.00 %</span>
<span class="c w" style="left:866px;top:559px">0</span>
<span class="c w" style="left:956px;top:559px">0.00 %</span>
<span class="c h" style="left:46px;top:575px">合计</span>
<span class="c r" style="left:206px;top:574px">14.65</span>
<span class="c r" style="left:386px;top:574px">1526.93</span>
<span class="c r" style="left:466px;top:574px">29.16 %</span>
<span class="c r" style="left:536px;top:574px">5236.69</span>
<span class="c g" style="left:696px;top:574px">-150.69</span>
<span class="c g" style="left:786px;top:574px">-2.53 %</span>
<span class="c r" style="left:866px;top:574px">104.53</span>
<span class="c r" style="left:956px;top:574px">1.79 %</span>
<div class="abs" id="wm"><svg width="26" height="26" viewBox="950 537 26 26" style="position:absolute;left:0;top:0"><path d="M958 539h8.500a6 6 0 0 1 6 6v8a6 6 0 0 1-6 6h-3.300l-2.700 2.800l.3-2.800H958a6 6 0 0 1-6-6v-8a6 6 0 0 1 6-6z" fill="#fff"/><text x="956.500" y="560" font-size="24" font-style="italic" font-weight="bold" fill="#252a33" font-family="Liberation Sans, sans-serif">f</text></svg><span>@iven</span></div>
<div id="tbline3" class="abs"></div>
<svg class="abs" style="left:784px;top:108px" width="13" height="6" viewBox="784 108 13 6"><polygon points="785.800,108 795.300,108 790.500,113.200" fill="#76889f"/></svg>
</body>
</html>
